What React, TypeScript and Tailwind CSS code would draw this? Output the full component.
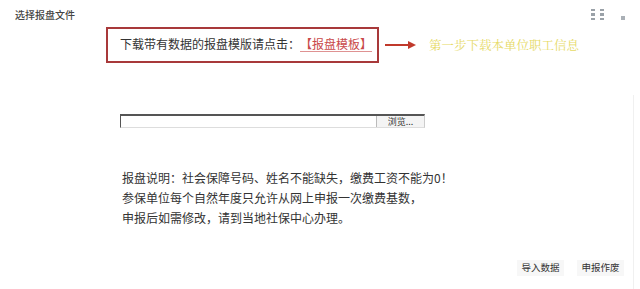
import React from 'react'

const font = { fontFamily: '"Noto Sans CJK SC", "Noto Sans", sans-serif' }

function Arrow() {
  return (
    <svg width="32" height="10" viewBox="0 0 32 10" className="shrink-0">
      <path d="M0 5 H25" stroke="#c0392b" strokeWidth="2" />
      <path d="M23 1 L31 5 L23 9 Z" fill="#c0392b" />
    </svg>
  )
}

function GridIcon() {
  return (
    <svg width="16" height="11" viewBox="0 0 16 11">
      <g fill="#9aa1a8">
        <rect x="1" y="0" width="4" height="2" />
        <rect x="1" y="4" width="4" height="3" />
        <rect x="1" y="9" width="4" height="2" />
        <rect x="10" y="0" width="4" height="2" />
        <rect x="10" y="4" width="4" height="3" />
        <rect x="10" y="9" width="4" height="2" />
      </g>
    </svg>
  )
}

export default function App() {
  return (
    <div
      className="relative flex h-[289px] w-[640px] flex-col overflow-hidden bg-white text-[#333]"
      style={font}
    >
      <div className="flex items-start justify-between pt-[9px] pl-[15px] pr-[15px]">
        <span className="text-[10px] font-medium leading-[12px] text-[#444]">选择报盘文件</span>
        <div className="flex items-center gap-[15px]">
          <GridIcon />
          <span className="mt-[6px] block h-[4px] w-[4px] bg-[#aab0b6]" />
        </div>
      </div>

      <div className="mt-[6px] flex items-center pl-[106px]">
        <div className="flex h-[36px] w-[273px] items-center border-2 border-[#a8393a] pb-[3px] pl-3 text-[12px] leading-none">
          <span className="text-[#333]">下载带有数据的报盘模版请点击：</span>
          <span className="text-[#c94a4a] underline decoration-[#c94a4a]/60 underline-offset-2">【报盘模板】</span>
        </div>
        <div className="ml-[6px] flex items-center">
          <Arrow />
          <span
            className="ml-[12px] text-[12.5px] leading-none text-[#e6da66]"
            style={{ fontFamily: '"Noto Serif CJK SC", "Noto Sans CJK SC", serif' }}
          >
            第一步下载本单位职工信息
          </span>
        </div>
      </div>

      <div className="ml-[120px] mt-[51px] flex h-[14px] w-[305px] border-t-2 border-l border-[#555] border-b border-r border-b-[#ddd] border-r-[#ccc]">
        <div className="flex-1 bg-white" />
        <div className="flex w-[48px] items-center justify-center border-l border-[#bbb] bg-[#f4f4f4] text-[9px] leading-none text-[#333]">
          浏览...
        </div>
      </div>

      <div className="ml-[122px] mt-[40px] flex flex-col text-[12px] leading-[20px] text-[#333]">
        <p>报盘说明：社会保障号码、姓名不能缺失，缴费工资不能为0！</p>
        <p>参保单位每个自然年度只允许从网上申报一次缴费基数，</p>
        <p>申报后如需修改，请到当地社保中心办理。</p>
      </div>

      <div className="mt-[32px] flex justify-end gap-[13px] pr-[16px]">
        <button className="h-[16px] w-[47px] bg-[#f7f7f7] text-[9.5px] leading-none text-[#333]">导入数据</button>
        <button className="h-[16px] w-[47px] bg-[#f7f7f7] text-[9.5px] leading-none text-[#333]">申报作废</button>
      </div>

      <div className="pointer-events-none absolute top-[95px] bottom-0 right-[6px] w-px bg-[#f0f0f0]" />
    </div>
  )
}
